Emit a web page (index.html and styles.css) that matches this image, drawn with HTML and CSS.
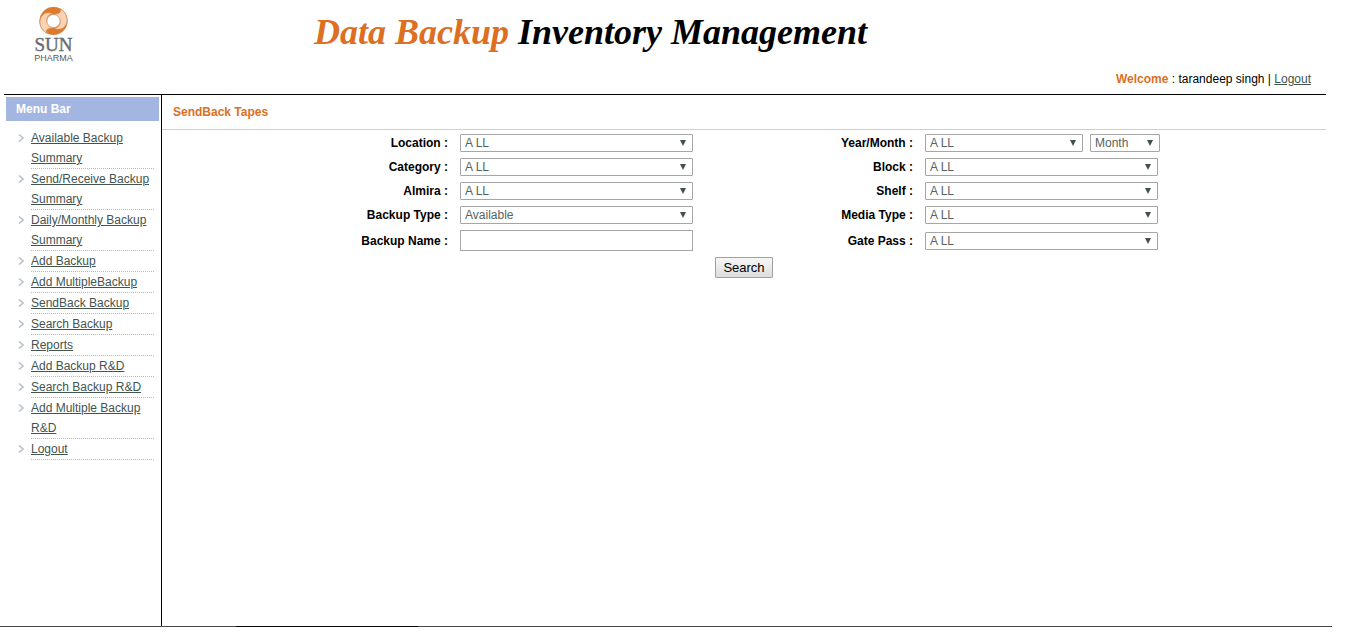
FILE: index.html
```
<!DOCTYPE html>
<html lang="en">
<head>
<meta charset="utf-8">
<title>Data Backup Inventory Management</title>
<link rel="stylesheet" href="styles.css">
</head>
<body>
<div class="page">
  <header class="header">
    <div class="brand">
      <svg class="logo" viewBox="0 0 42 58" role="img" aria-label="Sun Pharma">
        <g transform="translate(20.5 15)">
          <circle r="10.2" fill="none" stroke="#de7a2c" stroke-width="7.4"/>
          <g fill="#fad3b3" stroke="#d98c55" stroke-width=".5">
            <path d="M-10.5 -6C-16 -1 -14 9 -6.5 12.5C-9 7 -3 7 1 7C-6 6 -8 0 -6 -4C-5 -6 -3 -7 -1 -7.5C-5 -9 -9 -8 -10.5 -6Z"/>
            <path d="M10.5 6C16 1 14 -9 6.5 -12.5C9 -7 3 -7 -1 -7C6 -6 8 0 6 4C5 6 3 7 1 7.5C5 9 9 8 10.5 6Z"/>
          </g>
          <circle r="13.9" fill="none" stroke="#c98a60" stroke-width=".5"/>
          <circle r="6.6" fill="#fff" stroke="#b9825f" stroke-width=".6"/>
        </g>
        <text class="logo-name" x="20.5" y="45" text-anchor="middle">SUN</text>
        <text class="logo-sub" x="20.5" y="55" text-anchor="middle">PHARMA</text>
      </svg>
      <h1 class="title"><span class="accent">Data Backup</span> Inventory Management</h1>
    </div>
    <div class="user"><b class="accent">Welcome</b> : tarandeep singh | <a href="#">Logout</a></div>
  </header>
  <div class="body">
    <nav class="sidebar">
      <h2 class="menu-title">Menu Bar</h2>
      <ul class="menu">
        <li><a href="#">Available Backup Summary</a></li>
        <li><a href="#">Send/Receive Backup Summary</a></li>
        <li><a href="#">Daily/Monthly Backup Summary</a></li>
        <li><a href="#">Add Backup</a></li>
        <li><a href="#">Add MultipleBackup</a></li>
        <li><a href="#">SendBack Backup</a></li>
        <li><a href="#">Search Backup</a></li>
        <li><a href="#">Reports</a></li>
        <li><a href="#">Add Backup R&amp;D</a></li>
        <li><a href="#">Search Backup R&amp;D</a></li>
        <li><a href="#">Add Multiple Backup R&amp;D</a></li>
        <li><a href="#">Logout</a></li>
      </ul>
    </nav>
    <main class="main">
      <h2 class="section-title">SendBack Tapes</h2>
      <form class="form">
        <label for="location">Location :</label>
        <select id="location"><option>A LL</option></select>
        <label for="year">Year/Month :</label>
        <div class="pair">
          <select id="year"><option>A LL</option></select>
          <select class="month" aria-label="Month"><option>Month</option></select>
        </div>
        <label for="category">Category :</label>
        <select id="category"><option>A LL</option></select>
        <label for="block">Block :</label>
        <select id="block"><option>A LL</option></select>
        <label for="almira">Almira :</label>
        <select id="almira"><option>A LL</option></select>
        <label for="shelf">Shelf :</label>
        <select id="shelf"><option>A LL</option></select>
        <label for="type">Backup Type :</label>
        <select id="type"><option>Available</option></select>
        <label for="media">Media Type :</label>
        <select id="media"><option>A LL</option></select>
        <label for="name">Backup Name :</label>
        <input id="name" type="text">
        <label for="gate">Gate Pass :</label>
        <select id="gate"><option>A LL</option></select>
        <button class="search" type="button">Search</button>
      </form>
    </main>
  </div>
  <div class="bottom-line"></div>
</div>
</body>
</html>
```

FILE: styles.css
```
* { box-sizing: border-box; }
body {
  margin: 0;
  background: #fff;
  color: #000;
  font: 12px/20px Arial, "Liberation Sans", sans-serif;
}
a { color: #43544f; }
.accent { color: #dc6f22; }
.page {
  display: flex;
  flex-direction: column;
  min-height: calc(100vh - 6px);
}
.header {
  margin: 0 40px 0 4px;
  padding-bottom: 5px;
  border-bottom: 1px solid #000;
}
.brand {
  display: flex;
  align-items: flex-start;
  gap: 239px;
  height: 69px;
  padding: 6px 0 0 29px;
}
.logo {
  flex: none;
  width: 42px;
  height: 58px;
}
.logo-name {
  font: 19px "Liberation Serif", serif;
  fill: #696b70;
  stroke: #696b70;
  stroke-width: .4px;
}
.logo-sub {
  font: 9px "Liberation Sans", sans-serif;
  fill: #55585e;
}
.title {
  margin: 6px 0 0;
  font: italic bold 36px/40px "Monotype Corsiva", "Liberation Serif", serif;
  white-space: nowrap;
}
.user {
  padding-right: 15px;
  text-align: right;
}
.body {
  display: flex;
  flex: 1;
  margin: 0 40px 0 4px;
}
.sidebar {
  flex: none;
  width: 158px;
  padding: 2px;
  border-right: 1px solid #000;
}
.menu-title {
  margin: 0 0 7px;
  padding: 2px 10px;
  background: #a3b6e1;
  color: #fff;
  font-size: 12px;
  line-height: 20px;
}
.menu {
  margin: 0;
  padding: 0 5px 0 12px;
  list-style: none;
}
.menu li {
  display: flex;
}
.menu li::before {
  content: "";
  flex: none;
  width: 13px;
  background: url("data:image/svg+xml,%3Csvg xmlns='http://www.w3.org/2000/svg' width='7' height='8'%3E%3Cpath d='M1 .5L5 4L1 7.5' fill='none' stroke='%23b5c1d0' stroke-width='1.6'/%3E%3C/svg%3E") 0 6px no-repeat;
}
.menu a {
  flex: 1;
  border-bottom: 1px dotted #a9bcc6;
}
.main {
  flex: 1;
}
.section-title {
  margin: 0;
  padding: 7px 11px;
  border-bottom: 1px solid #c0d3de;
  color: #dc6f22;
  font-size: 12px;
  line-height: 20px;
}
.form {
  display: grid;
  grid-template-columns: 286fr 233px 208fr 235px 154fr;
  column-gap: 12px;
  row-gap: 6px;
  align-items: center;
  padding-top: 4px;
}
.form label {
  line-height: 18px;
  font-weight: bold;
  text-align: right;
}
.form label:nth-of-type(odd) { grid-column: 1; }
.form label:nth-of-type(even) { grid-column: 3; }
.form select {
  width: 233px;
  height: 18px;
  padding: 0 4px;
  border: 1px solid #a6a6a6;
  border-radius: 1px;
  appearance: none;
  background: #fff url("data:image/svg+xml,%3Csvg xmlns='http://www.w3.org/2000/svg' width='6' height='6'%3E%3Cpath d='M0 0H6L3 6Z' fill='%23435050'/%3E%3C/svg%3E") right 6px center no-repeat;
  color: #56645f;
  font: 12px/16px Arial, "Liberation Sans", sans-serif;
}
.form input {
  width: 233px;
  height: 21px;
  padding: 1px 4px;
  border: 1px solid #a6a6a6;
  font: 12px Arial, "Liberation Sans", sans-serif;
}
.pair {
  display: flex;
  gap: 7px;
}
.form .pair select {
  flex: 1;
  width: auto;
}
.form .pair .month {
  flex: none;
  width: 70px;
}
.search {
  grid-column: 1 / -1;
  justify-self: center;
  width: 58px;
  height: 21px;
  padding: 0;
  border: 1px solid #a0a0a0;
  border-radius: 1px;
  background: linear-gradient(#f6f6f6, #dddddd);
  color: #000;
  font: 13px Arial, "Liberation Sans", sans-serif;
}
.bottom-line {
  height: 1px;
  margin-right: 34px;
  background: linear-gradient(90deg, #484848 236px, #080808 236px 418px, #484848 418px);
}
```
